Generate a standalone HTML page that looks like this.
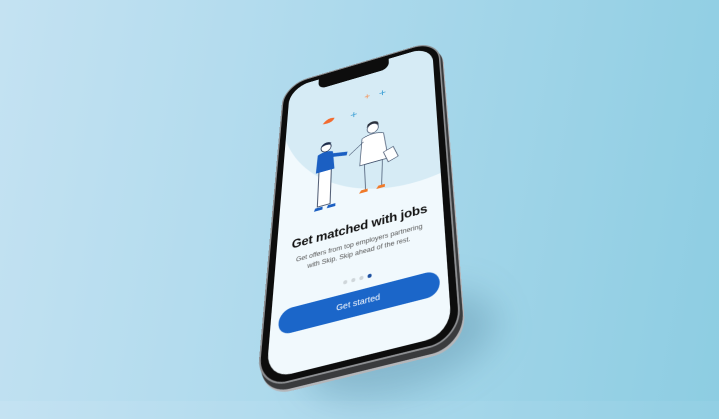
<!DOCTYPE html>
<html><head><meta charset="utf-8"><style>
html,body{margin:0;padding:0}
body{width:719px;height:401px;overflow:hidden;position:relative;
background:linear-gradient(100deg,#c4e2f2 0%,#acd9ec 45%,#8dcde2 100%);font-family:"Liberation Sans",sans-serif}
.shadow{position:absolute;left:300px;top:300px;width:200px;height:90px;border-radius:50%;background:rgba(40,90,120,.25);filter:blur(18px);transform:rotate(-18deg)}
.ph{position:absolute;left:0;top:0;width:300px;height:600px;transform-origin:0 0;
transform:matrix3d(0.4395,-0.1436,0,-0.0000783,-0.14375,0.33845,0,-0.00039005,0,0,1,0,290,88,0,1)}
.body{position:absolute;left:-15px;top:-13px;width:324px;height:620px;border-radius:52px;background:#0d0d0d;border:3px solid #8d8f92;box-shadow:4px 10px 0 #3a3b3d,6px 14px 0 #b4b6ba}
.scr{position:absolute;left:0;top:0;width:300px;height:600px;border-radius:42px;overflow:hidden;background:#f1f9fd}
.notch{position:absolute;left:62px;top:-2px;width:148px;height:28px;background:#0d0d0d;border-radius:0 0 16px 16px}
h1{position:absolute;left:0;width:300px;top:356px;margin:0;text-align:center;font-size:23.5px;font-weight:bold;color:#111;letter-spacing:-.3px}
p{position:absolute;left:0;width:300px;top:392px;margin:0;text-align:center;font-size:12.5px;line-height:18px;color:#555}
.dots{position:absolute;left:124px;top:458px}
.dots i{display:inline-block;width:7px;height:7px;border-radius:50%;background:#cfd6da;margin-right:7px}
.btn{position:absolute;left:14px;top:488px;width:272px;height:44px;border-radius:22px;background:#1b66c9;color:#fff;text-align:center;line-height:44px;font-size:15px}
</style></head><body>
<div class="shadow"></div>
<div class="ph">
<div class="body"></div>
<div class="scr">
<svg width="300" height="600" style="position:absolute;left:0;top:0">
<circle cx="250" cy="45" r="265" fill="#d6ebf5"/>
<path d="M75 120 q10 -14 24 -8 q-4 12 -24 8z" fill="#f26a2e"/>
<g stroke="#4aa6d8" stroke-width="2"><path d="M132 118h12M138 112v12"/><path d="M190 84h12M196 78v12"/></g>
<g stroke="#f0a070" stroke-width="2"><path d="M160 82h10M165 77v10"/></g>
<g stroke="#1c2b4a" stroke-width="1.5" fill="#fff">
<rect x="72" y="226" width="24" height="80" />
</g>
<path d="M68 192 q16 -8 30 0 l4 40 h-36z" fill="#1b5fc2"/>
<path d="M96 200 l30 6" stroke="#1b5fc2" stroke-width="8"/>
<circle cx="84" cy="178" r="10" fill="#fff" stroke="#1c2b4a" stroke-width="1.5"/>
<path d="M74 174 q8 -12 20 -4 l-2 4 q-10 -4 -18 2z" fill="#1c2b4a"/>
<path d="M68 308 h14 v6 h-16z M92 308 h14 v6 h-16z" fill="#1b5fc2"/>
<g stroke="#3a4a66" stroke-width="1.3" fill="#fff">
<path d="M155 182 q22 -10 42 0 l8 60 h-54z"/>
<path d="M160 242 l2 56 M194 242 l-2 56 M160 242 h34"/>
<path d="M158 190 l-28 22"/>
<rect x="200" y="222" width="20" height="26" transform="rotate(-20 210 235)"/>
<circle cx="176" cy="164" r="11"/>
</g>
<path d="M164 160 q12 -14 24 0 l-2 -8 q-10 -8 -20 0z" fill="#2a2f3a"/>
<path d="M154 296 h12 v6 h-16z M186 296 h12 v6 h-16z" fill="#f07a2a"/>
</svg>
<div class="notch"></div>
<h1>Get matched with jobs</h1>
<p>Get offers from top employers partnering<br>with Skip. Skip ahead of the rest.</p>
<div class="dots"><i></i><i></i><i></i><i style="background:#1b4fa0"></i></div>
<div class="btn">Get started</div>
</div>
</div>
</body></html>
